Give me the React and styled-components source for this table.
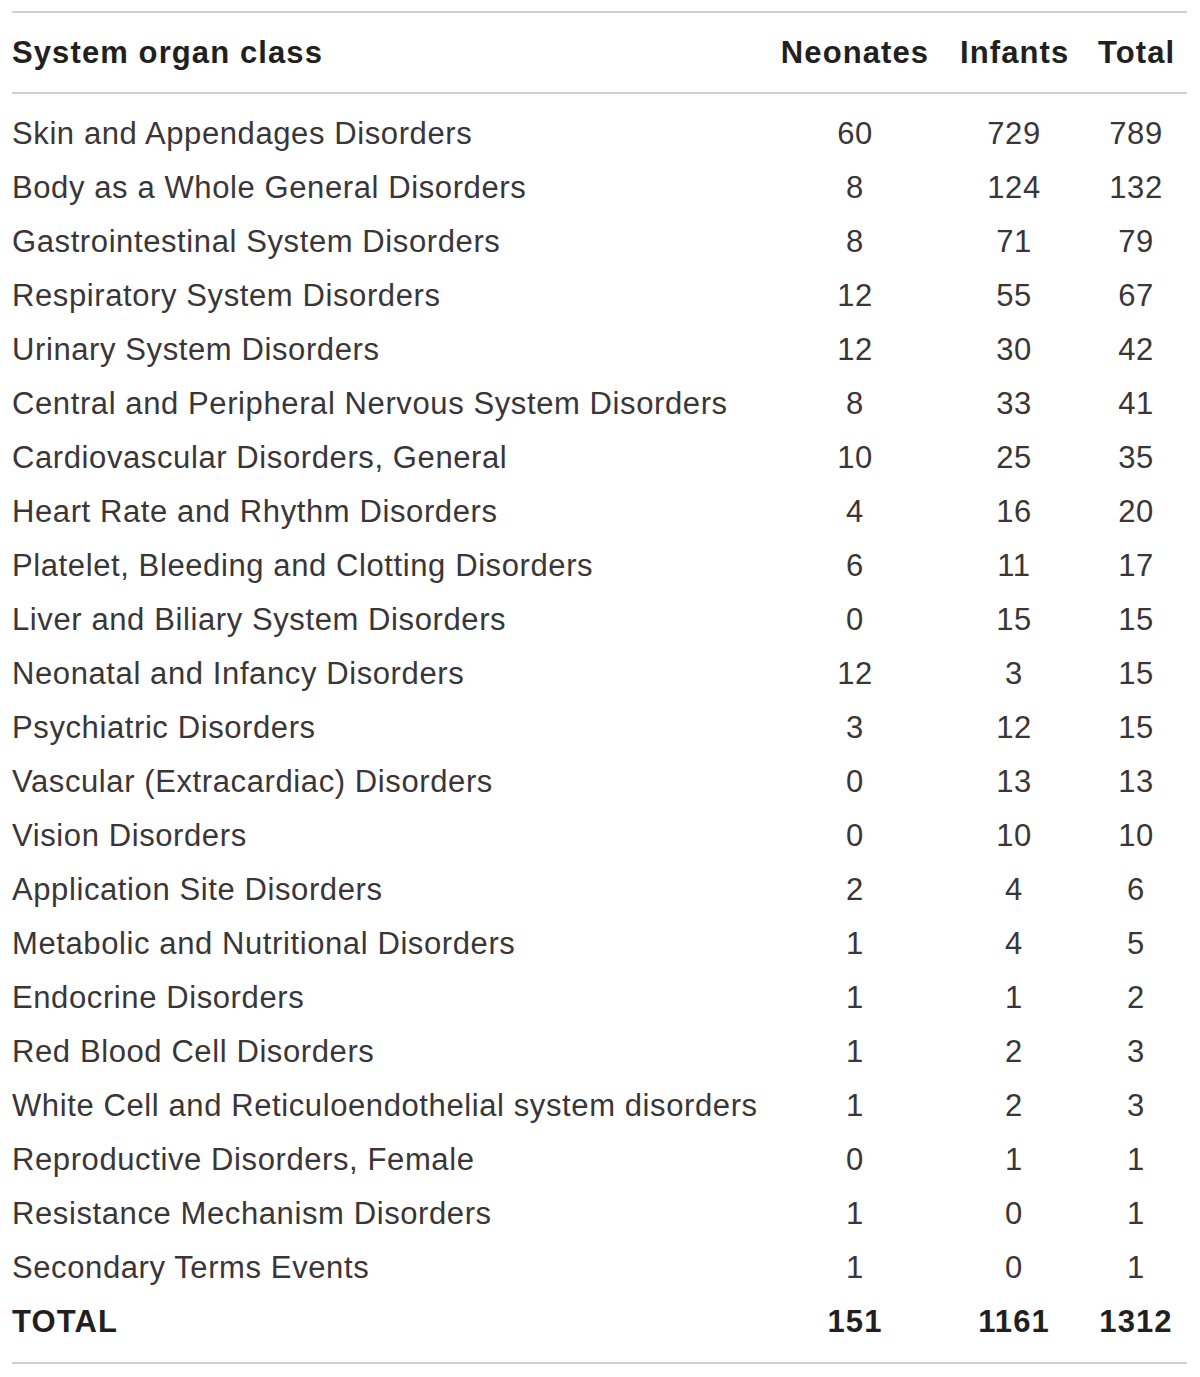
import React from "react";
import styled, { createGlobalStyle } from "styled-components";

const Global = createGlobalStyle`
  html, body { margin: 0; padding: 0; background: #fff; }
  body { font-family: "Liberation Sans", Arial, sans-serif; color: #231f20; }
`;

const rows = [
  ["Skin and Appendages Disorders", 60, 729, 789],
  ["Body as a Whole General Disorders", 8, 124, 132],
  ["Gastrointestinal System Disorders", 8, 71, 79],
  ["Respiratory System Disorders", 12, 55, 67],
  ["Urinary System Disorders", 12, 30, 42],
  ["Central and Peripheral Nervous System Disorders", 8, 33, 41],
  ["Cardiovascular Disorders, General", 10, 25, 35],
  ["Heart Rate and Rhythm Disorders", 4, 16, 20],
  ["Platelet, Bleeding and Clotting Disorders", 6, 11, 17],
  ["Liver and Biliary System Disorders", 0, 15, 15],
  ["Neonatal and Infancy Disorders", 12, 3, 15],
  ["Psychiatric Disorders", 3, 12, 15],
  ["Vascular (Extracardiac) Disorders", 0, 13, 13],
  ["Vision Disorders", 0, 10, 10],
  ["Application Site Disorders", 2, 4, 6],
  ["Metabolic and Nutritional Disorders", 1, 4, 5],
  ["Endocrine Disorders", 1, 1, 2],
  ["Red Blood Cell Disorders", 1, 2, 3],
  ["White Cell and Reticuloendothelial system disorders", 1, 2, 3],
  ["Reproductive Disorders, Female", 0, 1, 1],
  ["Resistance Mechanism Disorders", 1, 0, 1],
  ["Secondary Terms Events", 1, 0, 1],
];

const Wrapper = styled.div`
  padding: 11px 13px 0 12px;
  width: 1200px;
  box-sizing: border-box;
`;

const Table = styled.div`
  border-top: 2px solid #d0d0d0;
  border-bottom: 2px solid #d0d0d0;
`;

const Section = styled.div`
  padding: ${(p) => (p.$body ? "13px 0" : "0")};
  border-bottom: ${(p) => (p.$head ? "2px solid #d0d0d0" : "none")};
`;

const Row = styled.div`
  display: grid;
  grid-template-columns: minmax(0, 1fr) 150px 108px 76px;
  column-gap: 30px;
  padding-right: 13px;
  height: ${(p) => (p.$head ? "79px" : "54px")};
  align-items: center;
`;

const Cell = styled.div`
  font-size: 31px;
  font-weight: ${(p) => (p.$bold ? 700 : 400)};
  text-align: ${(p) => (p.$num ? "center" : "left")};
  white-space: nowrap;
  letter-spacing: ${(p) => (p.$bold ? "1.1px" : "0.6px")};
  color: ${(p) => (p.$bold ? "#231f20" : "#3a3637")};
`;

export default function App() {
  return (
    <>
      <Global />
      <Wrapper>
        <Table>
          <Section $head>
            <Row $head>
              <Cell $bold>System organ class</Cell>
              <Cell $bold $num>Neonates</Cell>
              <Cell $bold $num>Infants</Cell>
              <Cell $bold $num>Total</Cell>
            </Row>
          </Section>
          <Section $body>
            {rows.map((r) => (
              <Row key={r[0]}>
                <Cell>{r[0]}</Cell>
                <Cell $num>{r[1]}</Cell>
                <Cell $num>{r[2]}</Cell>
                <Cell $num>{r[3]}</Cell>
              </Row>
            ))}
            <Row>
              <Cell $bold>TOTAL</Cell>
              <Cell $bold $num>151</Cell>
              <Cell $bold $num>1161</Cell>
              <Cell $bold $num>1312</Cell>
            </Row>
          </Section>
        </Table>
      </Wrapper>
    </>
  );
}
